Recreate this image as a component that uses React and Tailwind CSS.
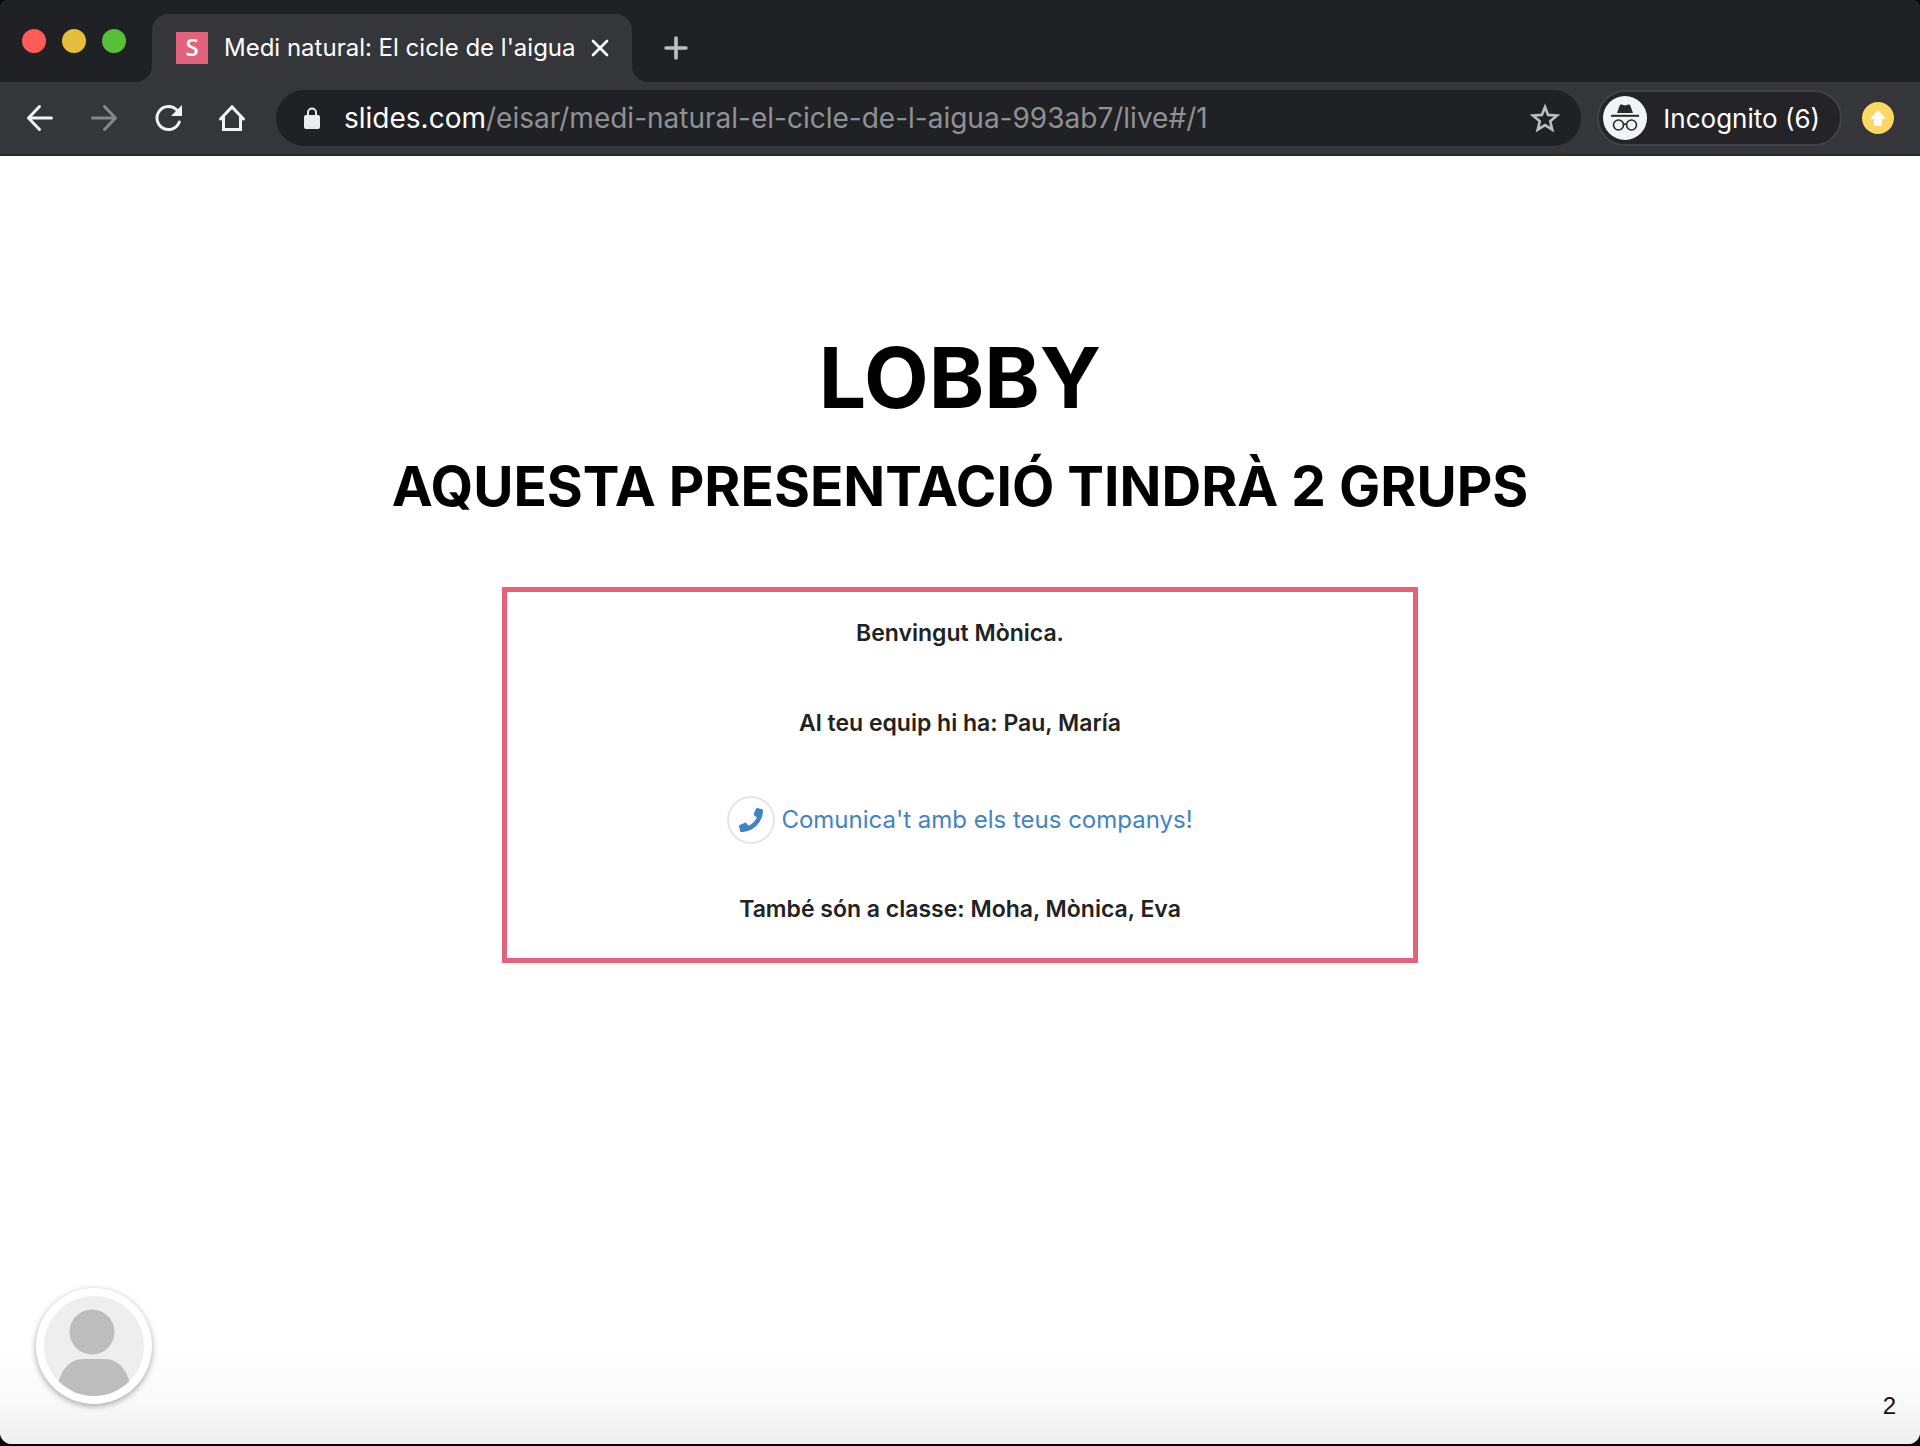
import React from "react";
import { FaPhone } from "react-icons/fa";

const iconButton = "flex size-8 shrink-0 items-center justify-center";

function TabStrip() {
  return (
    <div className="flex h-[82px] items-end bg-[#202124]">
      <div className="flex h-full w-[152px] shrink-0 items-center gap-4 pl-[22px]">
        <button aria-label="Tanca" className="size-6 rounded-full bg-[#ff5b57]" />
        <button aria-label="Minimitza" className="size-6 rounded-full bg-[#e5bf3c]" />
        <button aria-label="Amplia" className="size-6 rounded-full bg-[#57c038]" />
      </div>
      <div className="relative flex h-[68px] w-[480px] shrink-0 items-center rounded-t-2xl bg-[#35363a] pl-6 pr-5">
        <svg className="absolute -left-4 bottom-0 size-4 fill-[#35363a]" viewBox="0 0 16 16">
          <path d="M16 0v16H0A16 16 0 0 0 16 0z" />
        </svg>
        <svg className="absolute -right-4 bottom-0 size-4 fill-[#35363a]" viewBox="0 0 16 16">
          <path d="M0 0v16h16A16 16 0 0 1 0 0z" />
        </svg>
        <span className="flex size-8 shrink-0 items-center justify-center bg-[#e4637c] pb-0.5 font-['Open_Sans',sans-serif] text-2xl font-semibold leading-8 text-white">
          S
        </span>
        <span className="ml-4 flex-1 whitespace-nowrap text-2xl text-white">Medi natural: El cicle de l'aigua</span>
        <button aria-label="Tanca la pestanya" className="flex size-6 items-center justify-center">
          <svg className="size-5 stroke-white" viewBox="0 0 20 20" fill="none" strokeWidth="2.6" strokeLinecap="round">
            <path d="M3 3l14 14M17 3L3 17" />
          </svg>
        </button>
      </div>
      <button aria-label="Pestanya nova" className="mb-[22px] ml-8 flex size-6 items-center justify-center">
        <svg className="size-6 stroke-[#bdc1c6]" viewBox="0 0 24 24" fill="none" strokeWidth="3.6" strokeLinecap="round">
          <path d="M12 2v20M2 12h20" />
        </svg>
      </button>
    </div>
  );
}

function Toolbar() {
  return (
    <div className="flex h-[74px] items-center border-b-2 border-[#28292c] bg-[#35363a] pl-6 pr-[26px]">
      <div className="flex shrink-0 items-center gap-8">
        <button aria-label="Enrere" className={iconButton}>
          <svg className="size-8 stroke-[#f1f3f4]" viewBox="0 0 32 32" fill="none" strokeWidth="3" strokeLinecap="round" strokeLinejoin="round">
            <path d="M27.500 16H5M15.500 4.500L4.500 16l11 11.500" />
          </svg>
        </button>
        <button aria-label="Endavant" className={iconButton}>
          <svg className="size-8 stroke-[#86878a]" viewBox="0 0 32 32" fill="none" strokeWidth="3" strokeLinecap="round" strokeLinejoin="round">
            <path d="M4.500 16H27M16.500 4.500l11 11.500-11 11.500" />
          </svg>
        </button>
        <button aria-label="Actualitza" className={iconButton}>
          <svg className="size-8" viewBox="0 0 32 32" fill="none">
            <path d="M27.300 20A11.500 11.500 0 1 1 25 8.300" stroke="#f1f3f4" strokeWidth="3" strokeLinecap="round" />
            <path d="M30 3v11H19z" fill="#f1f3f4" />
          </svg>
        </button>
        <button aria-label="Inici" className={iconButton}>
          <svg className="size-8 stroke-[#f1f3f4]" viewBox="0 0 32 32" fill="none" strokeWidth="3" strokeLinecap="round">
            <path d="M4.500 17L16 5l11.500 12M7.500 15v12.500h17V15" />
          </svg>
        </button>
      </div>
      <div className="ml-7 flex h-14 min-w-0 flex-1 items-center rounded-full bg-[#202124] pl-7 pr-5">
        <svg className="h-6 w-4 shrink-0" viewBox="0 0 16 24">
          <path d="M4 10V6.500a4 4 0 0 1 8 0V10" fill="none" stroke="#e8eaed" strokeWidth="2" />
          <rect y="9" width="16" height="14" rx="2" fill="#e8eaed" />
        </svg>
        <span className="ml-6 flex-1 truncate text-[28px] leading-10 text-[#909194]">
          <span className="text-white">slides.com</span>/eisar/medi-natural-el-cicle-de-l-aigua-993ab7/live#/1
        </span>
        <button aria-label="Afegeix a les adreces d'interès" className={iconButton}>
          <svg className="size-8 stroke-[#bdbec0]" viewBox="0 0 32 32" fill="none" strokeWidth="2.6">
            <path d="M16 5l3.100 7.900 8.900.600-6.800 5.700 2.100 8.500L16 23.100l-7.300 4.600 2.100-8.500L4 13.500l8.900-.600z" />
          </svg>
        </button>
      </div>
      <button className="ml-4 flex h-14 shrink-0 items-center rounded-full border-2 border-[#414246] bg-[#242428] pl-1 pr-5 text-[26px] text-white">
        <svg className="mr-4 size-11" viewBox="0 0 44 44">
          <circle cx="22" cy="22" r="22" fill="#f1f3f4" />
          <path d="M14 17l2.700-7.500c.300-.900 1-1.200 2-.900l3.300.800 3.300-.800c1-.300 1.700 0 2 .900L30 17z" fill="#28292c" />
          <path d="M8 19.800h28" stroke="#28292c" strokeWidth="2" />
          <g fill="none" stroke="#28292c" strokeWidth="1.600">
            <circle cx="15.500" cy="29" r="5" />
            <circle cx="28.500" cy="29" r="5" />
            <path d="M20.500 28.500q1.500-1 3 0" />
          </g>
        </svg>
        Incognito (6)
      </button>
      <button aria-label="Actualització disponible" className="ml-5 shrink-0">
        <svg className="size-8" viewBox="0 0 32 32">
          <circle cx="16" cy="16" r="16" fill="#fdd663" />
          <path d="M16 8l8 9h-4v7h-8v-7H8z" fill="#fff" />
        </svg>
      </button>
    </div>
  );
}

function Slide() {
  return (
    <main className="flex flex-1 flex-col items-center bg-white bg-linear-to-t from-[#efefef] via-[#f9f9f9] via-[40px] to-white to-[100px]">
      <div className="flex w-full flex-1 flex-col items-center pt-[166px] font-bold text-black">
        <h1 className="text-[84px] leading-[112px] [font-optical-sizing:none]">LOBBY</h1>
        <h2 className="text-[55px] leading-[104px] [font-optical-sizing:none]">AQUESTA PRESENTACIÓ TINDRÀ 2 GRUPS</h2>
        <section className="mt-[49px] flex w-[916px] max-w-full flex-col items-center border-[5px] border-[#e4637c] px-6 pb-8 pt-6 text-[23px] font-semibold leading-[34px] text-[#222]">
          <p>Benvingut Mònica.</p>
          <p className="mt-14">Al teu equip hi ha: Pau, María</p>
          <a href="#trucada" className="mt-14 flex items-center gap-1.5 text-2xl font-normal text-[#4183c4]">
            <span className="flex size-12 items-center justify-center rounded-full border-2 border-[#e5e5e5]">
              <FaPhone className="size-6" />
            </span>
            Comunica't amb els teus companys!
          </a>
          <p className="mt-12">També són a classe: Moha, Mònica, Eva</p>
        </section>
      </div>
      <footer className="flex w-full items-end justify-between pb-[22px] pl-9 pr-6">
        <button
          aria-label="Perfil"
          className="mb-[18px] size-[116px] overflow-hidden rounded-full bg-white p-2 shadow-[0_2px_6px_rgba(0,0,0,0.35)]"
        >
          <svg className="size-[100px] rounded-full bg-[#eee]" viewBox="0 0 100 100">
            <circle cx="48" cy="36" r="22.500" fill="#bdbdbd" />
            <path d="M12 100C14 76 24 63 40 63h20c16 0 26 13 28 37z" fill="#bdbdbd" />
          </svg>
        </button>
        <span className="font-['Liberation_Sans',sans-serif] text-2xl leading-8 text-[#111]">2</span>
      </footer>
    </main>
  );
}

export default function App() {
  return (
    <div className="min-h-screen bg-[#05060c] pb-0.5">
      <div className="flex min-h-[calc(100vh-2px)] flex-col overflow-hidden rounded-b-xl rounded-t-md font-['Inter',sans-serif]">
        <TabStrip />
        <Toolbar />
        <Slide />
      </div>
    </div>
  );
}
